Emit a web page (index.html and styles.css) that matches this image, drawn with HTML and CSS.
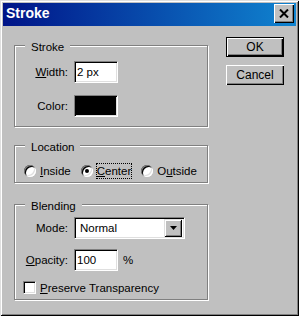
FILE: index.html
```html
<!DOCTYPE html>
<html>
<head>
    <title>Stroke</title>
    <link rel="stylesheet" href="styles.css">
</head>
<body>
    <div class="window">
        <div class="titlebar">
            <span class="title">Stroke</span>
            <div class="close">
                <svg width="10" height="9" viewBox="0 0 10 9">
                    <path d="M1 0.5 L9 8.5 M9 0.5 L1 8.5" stroke="#000" stroke-width="2" fill="none"/>
                </svg>
            </div>
        </div>

        <div class="content">
            <div class="groups">
                <div class="group group-stroke">
                    <span class="legend">Stroke</span>
                    <div class="fields">
                        <span class="lbl"><u>W</u>idth:</span>
                        <div class="textbox">2 px</div>
                        <span class="lbl">Color:</span>
                        <div class="swatch"></div>
                    </div>
                </div>

                <div class="group group-location">
                    <span class="legend">Location</span>
                    <div class="radio-row">
                        <div class="radio-item">
                            <span class="radio"></span>
                            <span class="radio-text"><u>I</u>nside</span>
                        </div>
                        <div class="radio-item">
                            <span class="radio checked"></span>
                            <span class="radio-text focus"><u>C</u>enter</span>
                        </div>
                        <div class="radio-item">
                            <span class="radio"></span>
                            <span class="radio-text">O<u>u</u>tside</span>
                        </div>
                    </div>
                </div>

                <div class="group group-blending">
                    <span class="legend">Blending</span>
                    <div class="fields">
                        <span class="lbl">Mode:</span>
                        <div class="select">
                            <span class="select-text">Normal</span>
                            <div class="drop-btn">
                                <svg width="7" height="4" viewBox="0 0 7 4">
                                    <polygon points="0,0 7,0 3.5,4" fill="#000"/>
                                </svg>
                            </div>
                        </div>
                        <span class="lbl"><u>O</u>pacity:</span>
                        <div class="opacity-row">
                            <div class="textbox">100</div>
                            <span class="unit">%</span>
                        </div>
                    </div>
                    <div class="check-row">
                        <span class="checkbox"></span>
                        <span><u>P</u>reserve Transparency</span>
                    </div>
                </div>
            </div>

            <div class="buttons">
                <div class="btn btn-default">OK</div>
                <div class="btn">Cancel</div>
            </div>
        </div>
    </div>
</body>
</html>
```

FILE: styles.css
```css
body {
    margin: 0;
    font-family: "Liberation Sans", Arial, sans-serif;
    font-size: 11.5px;
    color: #000;
    background-color: #c0c0c0;
}

u {
    text-decoration: underline;
    text-underline-offset: 1px;
}

.window {
    box-sizing: border-box;
    width: 299px;
    height: 316px;
    padding: 3px;
    background-color: #c0c0c0;
    box-shadow: inset 1px 1px 0 #dfdfdf, inset -1px -1px 0 #000,
                inset 2px 2px 0 #fff, inset -2px -2px 0 #808080;
}

.titlebar {
    display: flex;
    align-items: flex-start;
    height: 23px;
    padding: 1px 2px 0 3px;
    box-sizing: border-box;
    background: linear-gradient(to right, #001488, #1084d0);
}

.title {
    margin-top: 1px;
    font-size: 14px;
    line-height: 17px;
    font-weight: bold;
    color: #fff;
}

.close {
    display: flex;
    align-items: center;
    justify-content: center;
    width: 20px;
    height: 19px;
    margin-left: auto;
    box-sizing: border-box;
    background-color: #c0c0c0;
    box-shadow: inset 1px 1px 0 #fff, inset -1px -1px 0 #000,
                inset -2px -2px 0 #808080;
}

.content {
    display: flex;
    align-items: flex-start;
    padding-left: 11px;
}

.groups {
    padding-top: 19px;
}

.group {
    position: relative;
    box-sizing: border-box;
    width: 194px;
    border: 1px solid #808080;
    box-shadow: inset 1px 1px 0 #fff, 1px 1px 0 #fff;
}

.group-stroke {
    height: 82px;
    padding-top: 15px;
}

.group-location {
    height: 38px;
    margin-top: 18px;
    padding: 17px 0 0 9px;
}

.group-blending {
    height: 96px;
    margin-top: 21px;
    padding-top: 12px;
}

.legend {
    position: absolute;
    top: -5px;
    left: 10px;
    padding: 0 6px 0 6px;
    line-height: 13px;
    background-color: #c0c0c0;
}

.fields {
    display: grid;
    grid-template-columns: 53px auto;
    grid-auto-rows: 22px;
    column-gap: 6px;
    row-gap: 12px;
    align-items: center;
    justify-items: start;
}

.group-blending .fields {
    row-gap: 10px;
}

.lbl {
    justify-self: end;
}

.textbox, .swatch, .select, .checkbox {
    box-sizing: border-box;
    border: 1px solid;
    border-color: #808080 #fff #fff #808080;
    box-shadow: inset 1px 1px 0 #000, inset -1px -1px 0 #dfdfdf;
}

.textbox {
    width: 44px;
    height: 22px;
    padding: 0 2px;
    line-height: 20px;
    background-color: #fff;
}

.swatch {
    width: 44px;
    height: 22px;
    background-color: #000;
}

.select {
    display: flex;
    align-items: center;
    width: 111px;
    height: 22px;
    padding: 2px 2px 2px 5px;
    background-color: #fff;
}

.select-text {
    flex: 1;
}

.drop-btn {
    display: flex;
    align-items: center;
    justify-content: center;
    width: 18px;
    height: 18px;
    box-sizing: border-box;
    background-color: #c0c0c0;
    box-shadow: inset 1px 1px 0 #dfdfdf, inset -1px -1px 0 #000,
                inset 2px 2px 0 #fff, inset -2px -2px 0 #808080;
}

.opacity-row {
    display: flex;
    align-items: center;
    gap: 5px;
}

.radio-row {
    display: flex;
    align-items: center;
    gap: 9px;
    height: 16px;
}

.radio-item {
    display: flex;
    align-items: center;
    gap: 3px;
}

.radio {
    position: relative;
    width: 12px;
    height: 12px;
    border-radius: 50%;
    background-color: #fff;
    box-shadow: inset 1px 1px 0 #808080, inset -1px -1px 0 #fff,
                inset 2px 2px 0 #000, inset -2px -2px 0 #dfdfdf;
}

.radio.checked::after {
    content: "";
    position: absolute;
    top: 4px;
    left: 4px;
    width: 4px;
    height: 4px;
    border-radius: 50%;
    background-color: #000;
}

.radio-text {
    border: 1px dotted transparent;
    line-height: 14px;
}

.radio-text.focus {
    border-color: #000;
}

.check-row {
    display: flex;
    align-items: center;
    gap: 4px;
    margin: 10px 0 0 8px;
}

.checkbox {
    width: 13px;
    height: 13px;
    background-color: #fff;
}

.buttons {
    display: flex;
    flex-direction: column;
    gap: 8px;
    margin-left: 18px;
    padding-top: 11px;
}

.btn {
    box-sizing: border-box;
    width: 58px;
    height: 20px;
    line-height: 20px;
    text-align: center;
    font-size: 12px;
    background-color: #c0c0c0;
    box-shadow: inset 1px 1px 0 #fff, inset -1px -1px 0 #000,
                inset -2px -2px 0 #808080;
}

.btn-default {
    border: 1px solid #000;
    line-height: 18px;
}
```
